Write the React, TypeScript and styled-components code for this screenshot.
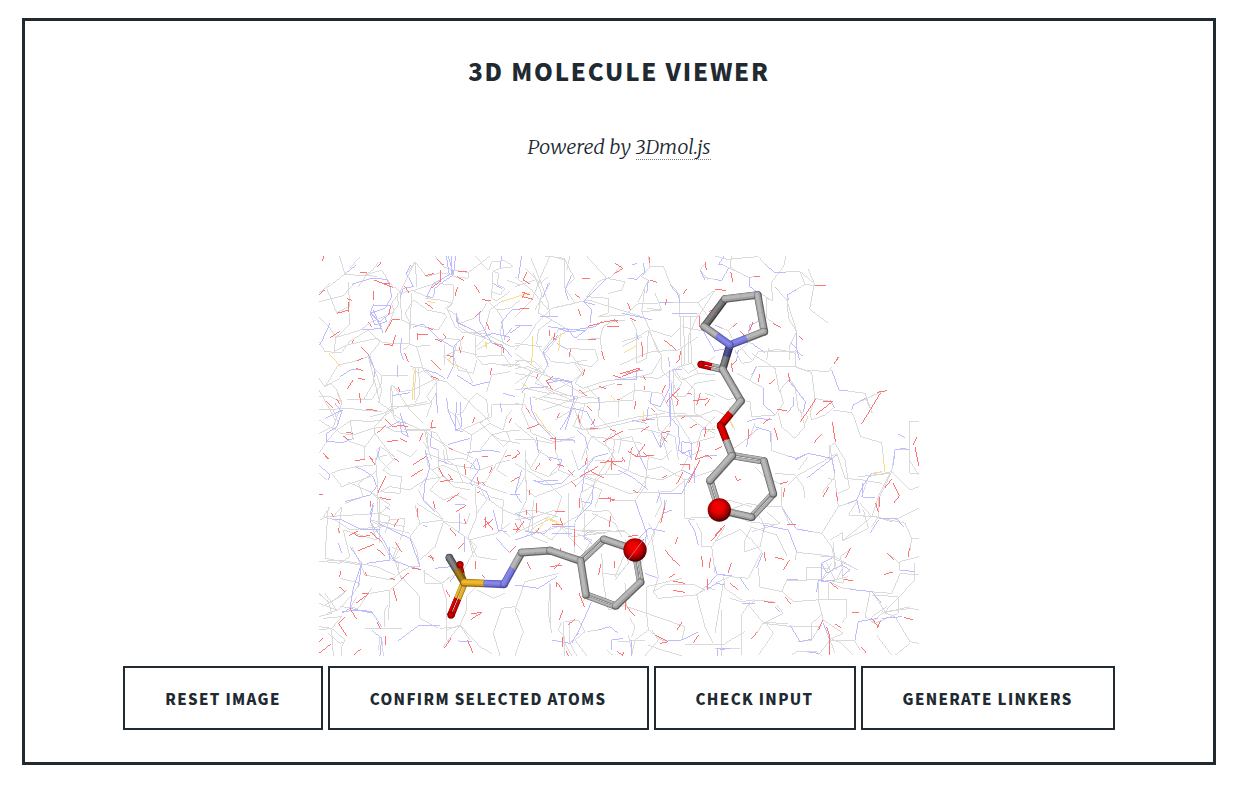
import React from 'react';
import styled, { createGlobalStyle } from 'styled-components';

const GlobalStyle = createGlobalStyle`
  * { box-sizing: border-box; }
  body {
    margin: 0;
    background: #ffffff;
    color: #212931;
    font-family: Merriweather, 'Liberation Serif', serif;
  }
`;

const Panel = styled.main`
  display: flex;
  flex-direction: column;
  align-items: center;
  margin: 18px 26px 21px 22px;
  padding: 30px 24px 32px;
  border: 3px solid #212931;
`;

const Title = styled.h1`
  margin: 0;
  font-family: 'Source Sans Pro', 'Noto Sans CJK JP', sans-serif;
  font-size: 24px;
  font-weight: 900;
  line-height: 40px;
  letter-spacing: 0.075em;
  text-transform: uppercase;
`;

const Credit = styled.p`
  margin: 38px 0 91px;
  font-size: 20px;
  font-style: italic;
  font-weight: 300;
  line-height: 36px;
`;

const CreditLink = styled.a`
  color: inherit;
  text-decoration: none;
  border-bottom: 1px dotted #7c8186;
`;

const Viewer = styled.svg`
  display: block;
  width: 600px;
  max-width: 100%;
  height: auto;
  overflow: hidden;
`;

const Actions = styled.div`
  display: flex;
  flex-wrap: wrap;
  justify-content: center;
  gap: 5px;
  margin-top: 10px;
`;

const ActionButton = styled.button`
  height: 64px;
  padding: 0 40px;
  border: 2px solid #212931;
  border-radius: 0;
  background: #ffffff;
  color: #212931;
  font-family: 'Source Sans Pro', 'Noto Sans CJK JP', sans-serif;
  font-size: 15px;
  font-weight: 900;
  letter-spacing: 0.09em;
  text-transform: uppercase;
  white-space: nowrap;
  cursor: pointer;
`;

type Element = 'C' | 'N' | 'O' | 'S';

const WIRE: Record<Element, string> = {
  C: '#dadada',
  N: '#bcbcff',
  O: '#ff7474',
  S: '#ffdc80',
};

type Tile = { x: number; y: number } & Record<Element, string>;

/* Protein wireframe, split in tiles; three path units make one pixel. */
const TILES: Tile[] = [
  {
    x: -9, y: -6,
    C: 'M88 18L105 72L50 115L80 188L118 170L116 97M27 155L100 137L130 103M105 72L160 78L188 60L207 35M160 78L215 60L240 100L270 125L315 35L350 80L390 68L430 75M316 35L320 110M315 35L290 72M375 18L400 50L430 60L475 68L540 18M475 68V85L430 80M494 18L535 60L547 35L585 32L610 50L570 55L548 65L545 145L560 152L600 125M550 65L565 68L563 105L585 115L570 135L545 125M27 200L60 235L78 262L72 305L110 285L200 265L220 278L250 280L300 282L318 290L360 285M78 262L120 250L155 238L185 215L245 190L265 165L262 130L310 122L360 145M78 262L118 225V190M27 275L45 305L95 308L118 275L175 240L210 275L200 290L175 320L130 335L85 345L45 410L27 385M45 410L60 400L80 420L95 455L60 440L27 440M45 410L90 385M175 320L185 345L215 378L295 378M175 320L210 460L250 485M180 318L215 420L205 460M240 100L270 125L275 210L300 222L385 240L410 200L402 190L352 180L310 150L285 190L300 220L297 285L280 300M270 125L245 160L252 185L225 250M305 130L298 280M310 122L345 110L380 100L430 105L430 150L412 178L440 195L450 220L490 205L515 185L530 160M345 145L390 150L430 160L405 175M412 178L435 230L460 248L525 250L605 290M440 195L445 230L480 250L528 265L580 290M320 290L340 360L370 388L410 395L470 450L540 515M318 350L312 450M325 350L330 430L315 460M300 350L345 355L380 395L350 440L365 460L350 500M345 360L325 370L305 355M245 405L270 425L310 420L370 390M240 410L245 490L290 520L345 545L355 600L365 629M245 405L250 500L285 540L350 540L370 535M252 408L300 480L340 520M180 500L220 490L270 470L330 460L350 455M80 540L125 510L175 515L215 510L240 470L300 470L360 460L380 430L378 395M80 540L90 550L130 555L190 535L220 500L250 480M27 550L70 530L95 460L80 425M27 510L75 540L85 520L70 480M116 475L27 480M116 475L155 480L215 485M110 450L185 450L215 400L215 378M160 450L190 400V375M190 535L225 530L255 545L350 540L355 600L340 575M193 530L195 550L165 590L120 575L100 560M165 590L163 629M120 510L130 570M195 550L225 590L250 620M27 610L50 575L80 540M200 600L210 590L255 620M350 540L380 550L410 600L412 629M350 545L365 560L430 600L470 615L490 625M412 480L440 500L455 540L500 520L545 500L545 465L630 465M440 495L460 485L480 450L500 430L530 450L535 500L510 520L545 555L580 545L630 540M460 540L485 555L480 600L470 629M485 555L540 520L580 540L590 500L605 480M540 550L570 570L630 580M510 600L545 555L580 590L600 570L590 545M530 150L560 180L600 175L630 150M560 180L580 210L570 250L580 280L605 290L630 285M495 260L497 320L520 345L545 340L605 350L630 330M500 300L545 275M500 320L580 315L605 350M500 290L530 260M440 280L430 320L445 360L490 370L500 330M405 320L425 340L470 360L490 400M530 425L545 375L600 365M575 315V290M570 345L630 345M390 270L410 265L450 270L455 300M405 345V285M400 320L440 300L500 315M145 110L170 75L200 80M27 420L60 480L75 510M60 100L27 130M120 55L150 20M590 90L630 105M580 150L540 180L525 240L490 250',
    N: 'M105 72L138 45M125 103L185 85L230 88L240 110L245 140L225 175L180 190L195 225L230 215L225 200M243 166L190 165L180 190L210 215L240 190M185 190L215 230M27 285L35 275L60 220M350 140L370 142L375 115L400 95L430 75L437 18M409 18L418 75L370 100L350 140M415 18L430 75M425 18V75M290 72L310 110L280 115L270 145M288 72L302 45M438 190L445 220L490 240L520 260L550 250L600 262M440 190V215L470 230M510 185V215L545 280L575 285L605 320M575 18L570 55M605 180L575 215L585 270M630 180H605M600 250L630 228M585 260L605 235M548 100L575 115M310 232L340 222L385 265L430 292L450 270M275 265L270 300L280 330M345 360L380 370L405 385M410 388L430 350V290M440 375L490 407L540 395M245 437L300 428M175 315L195 360V380M90 380L125 358L145 360M262 345V380M75 460L95 485L80 530L50 550V575L100 577L130 565M45 505L75 490L100 480M378 430L383 490M410 445L415 485L440 540L455 530L450 455M440 455L435 540L460 545M270 490L295 560L275 550L270 520M230 535L265 515L290 520M415 583L480 565M470 608L540 600L570 607M580 430L615 440M210 590L200 629M365 545L360 590L385 600M570 460L575 485M155 240L215 235M190 180L220 250',
    O: 'M42 18L37 34M150 68H170M214 35L202 52M192 90L248 112M215 100H240M190 123V150M27 135L46 118M111 145L126 152M81 190L116 180V155M116 155V187M243 168L235 195M225 247L248 208L270 209M61 262L89 245M125 280L132 270M152 290L178 315M175 215L184 230M222 283L248 286L256 256M283 108L298 130M382 28L403 47M345 78L373 70M363 115L392 93L391 60M445 64H470M442 80L461 92M443 112L435 137M493 105L510 130M515 148L542 153M345 158L370 176M495 200L514 183M529 216L538 240M323 250V270M323 253L355 254M355 232L368 240M375 267L395 275M400 253L408 263M454 270L460 258M447 290L453 310M410 316L430 320M283 308L295 335M362 330L392 360M363 378L386 388M545 355L540 375M552 280L582 296V310M591 275L600 268M140 332L160 325M138 355L158 362M145 384L165 390M130 390L112 417M148 430L152 458M80 447L88 462M47 453L67 473M168 478L200 481M265 410L270 425M225 508L248 530L270 527L294 529M232 575L265 570M201 550L227 527M108 547L130 550M100 558L116 570M39 608L56 627M328 574L338 549M360 532H378M367 510L363 530M270 565L290 575M494 500L488 520M605 503L597 520M180 620L188 629M150 628H165M418 595L428 599M585 620L602 615',
    S: 'M55 308L92 350M313 360L306 450M431 311L416 329L435 354M576 155L630 137M352 154L374 158M529 275V296M526 275V290',
  },
  {
    x: 196, y: -6,
    C: 'M48 25L75 90L100 160L105 200M75 85L105 18L150 30L165 60L180 85L150 115M90 18L150 25L150 115M165 18L155 60M215 18L275 85L290 80L320 45M275 85L250 95L215 140L280 145M275 85L330 95L320 120L280 130M280 145V190L250 200L330 195L370 160L550 157L600 120M150 115L180 160L110 175L65 220L40 260L0 300M110 175L220 150L380 200M75 90L50 150L0 200M30 55L75 100L100 80M55 70L80 130L70 190L110 210L160 240L130 260L90 310M0 80L50 120L100 180M0 110L60 90M400 18L405 50L445 48L465 100L495 135V200L550 200L600 120M405 50L380 80L400 90L370 155M420 130L440 180L395 175M440 180L380 185L405 240L470 260L500 230L600 250M550 160L580 200M560 80L600 88M580 90L555 60L575 35M495 200L500 350L520 370L600 320M505 200L510 340L490 355M525 200L530 340L490 350L480 360L500 390L550 370L530 340M550 190L520 260V340M350 210L365 240V340L395 325L400 240L370 260L320 275M400 240L440 320L410 370L355 385M405 245L430 310M315 345L370 320L410 305L490 300L550 260M185 270L255 265L260 300M255 265L265 230L290 215L330 210M160 295L240 300L250 330L230 350L180 340L200 370M165 310L205 360L180 400L205 415L265 395L360 380L430 385L480 355M85 305L110 335L160 340L215 330M85 300L130 240L160 235M110 210L70 240L65 280L100 340L85 370L40 350L0 355M0 330L60 335L110 390L170 395L205 370M0 310L85 370L60 400L170 440M0 370L60 380L100 420L170 450M0 345L130 390L200 430L300 400M0 400L80 350M0 280L80 290M20 420L50 360M0 420L30 415L100 430L160 400M30 430L20 480L50 550L115 575L180 570M0 460L30 465L50 500L120 560M50 440L180 480L200 540L370 500L450 490M60 450L110 430L190 440L170 480L120 510M80 440L140 450L200 460L290 455L355 450L360 400M85 480L200 440L250 445L215 410M200 470L175 530L210 540L260 535L370 510L440 500L560 495L600 480M210 460L195 520L230 560L320 570L380 580M255 440L250 500L290 540L320 565L310 610M310 500V450L360 420L440 430L460 470M290 600L230 560L210 600L200 629M0 520L60 570L110 580L180 560M0 570L60 570L70 600L110 629M300 629L270 580L290 550M290 629L300 570L350 560L380 629M340 540L380 535L440 550L460 629M400 450L430 480L470 490L510 490L560 530L600 550M425 490L430 540L480 560L490 629M430 560L480 500L560 500M470 360L500 400L470 440L480 500L530 580L600 560M475 360V440L510 440L540 400L600 390M500 380L540 420V490L590 520M550 370L600 375M440 320V360L475 400L490 440M570 430L600 440M545 590L560 540L600 500M320 290L380 260M380 185L390 110M105 100L60 180',
    N: 'M20 18L10 85M100 100L85 140M170 75L150 120L160 150M275 85L205 155L230 180L225 220M205 155L240 165M350 45L365 40M400 90L395 130M340 85L365 88L390 65L385 40M465 105L490 135L495 158M435 158H475M555 60L570 90M0 228H50M75 200L130 200M160 240L180 265L220 235M100 230L175 240L240 230L260 215M215 240L160 245L130 235M130 255L85 305L100 350M125 280L160 300M320 190L370 200L410 210M365 250L370 270M470 190H545M560 235L600 305M460 320L465 350M330 370L385 360M300 390L365 390V360M100 390L125 385L170 395L175 450M20 430L30 415L100 410M45 440L50 480L70 520L120 570L175 570L180 580M95 400L140 390L170 400M175 475L215 485L240 530M180 440L160 500L135 540M170 480L150 540M250 440L255 480M185 540L210 560L220 600M410 430L405 460L435 470L465 410V360M465 430V500L490 530V560M470 400L465 530M400 470L395 510L420 510M495 560L490 600L530 625L530 580L500 575V610L530 600M440 550L435 595L460 550M410 540L435 590M560 540L600 540M65 560L70 610M500 360H475M350 510L395 520',
    O: 'M35 66L25 90L44 102M200 85H225M22 128L45 134M22 140L55 148M20 145L30 125M8 178L42 174M180 133L195 144M190 178L197 198M301 40L323 55L297 72M404 20L403 40M404 90L425 97M516 118L503 132M454 148L452 165M338 160L347 180M570 35L574 60M583 185L600 175M220 229L270 215L310 210M275 229H312M345 205L364 213M298 208L308 218M220 268H242M102 240L104 258M119 250L115 270M113 260L124 270M166 297L163 320M260 303L268 330M378 276L384 300V320M446 269L484 299M496 303L494 327L484 340M316 371L375 354M320 380L375 358M295 376L317 384M68 373L64 388M92 390L112 420M115 377L95 395M210 358L203 378M252 408L273 417M305 403H320M191 418L217 440M385 378L392 390M390 408V420M451 405L440 430M494 414L451 460M470 430L490 450L485 468M516 430L532 433M535 452L580 446M545 465L556 430M570 468L585 446M217 470L232 483M34 473L45 490M35 537L72 523M133 490L126 505M190 495L194 520M240 507L230 525M225 535L250 535M285 537L303 545M265 575L325 542M362 453L359 477M305 448L315 449M410 475L418 485M378 545L403 528M382 513L403 508M121 560V600M105 567L123 564M352 590L346 610M390 583L365 618M360 620L417 617M526 533L545 523M573 530L569 560M555 575L550 600M440 547L466 545M455 575L443 560M498 505L510 499M555 198V230M0 620L15 610',
    S: 'M0 142L45 128M52 258V315L48 345M136 250L131 304M328 308L367 286M22 400L42 416M59 487L105 553M288 436L302 455M386 483V520M575 547L600 530M450 558L433 580',
  },
  {
    x: 396, y: -6,
    C: 'M0 18L35 28L130 20L150 42M25 45L100 82L132 79M212 18L208 45L170 97L172 152L155 145V205L180 220M130 125L170 152M213 65H255L270 104L240 120M255 65L298 100M280 58L298 100L284 178L340 220M270 104L300 106M181 112L215 150L245 245L220 205L217 145M245 245L225 285V330M0 225L40 242L60 222M40 242L55 270L110 280L145 305L190 298L242 310M100 280L60 310M160 295L155 330M75 290L110 330M50 18L45 50L65 65',
    N: 'M150 42L178 67H213M28 18L10 45L25 45M40 55L20 92L0 88M243 120L217 135L220 150M105 80V110L125 125M181 112L190 120M100 250L105 225L130 215M0 225L20 235M110 280L150 308M230 280L245 295L253 329M245 250V300M70 300L65 329M0 302L40 295',
    O: 'M117 79H134M300 106H332M47 65L54 97M0 118L32 121M175 220L197 233M253 257L262 269M115 215L104 242M65 220L54 232M76 244L90 260M370 320L366 329',
    S: '',
  },
  {
    x: 396, y: 94,
    C: 'M60 0L80 40L110 35L130 5L240 5L243 50L290 68L300 145L350 155M110 10L180 55L193 125M130 50L240 50L265 60L340 65L352 50M65 70L147 115M125 50L105 90M0 130L40 150L70 140M180 195L205 160L195 120L220 90L240 110M220 80L265 150M240 110L250 180L280 200L270 220M190 190L200 230L240 265L270 230L255 180M375 120L450 130L472 190L450 140M500 125L413 165M353 180L412 188L437 260L500 278L505 320M300 145L285 190L290 210L330 195L355 175M0 180L40 200L60 240M75 150L105 155L110 200L180 195M170 250V302L220 318M120 220L105 260L50 300M360 278L345 290L360 380L320 430M360 280L390 330L403 415L370 430M345 285V330M390 385L443 390L500 400M390 385L365 310L340 325M370 470L425 450M370 470L320 550L245 537M370 470L360 390L340 385M280 320L250 360M180 370L240 375L265 410L270 445M220 405L250 375L340 325M150 380L120 350M200 405L150 380M145 335L120 315M60 325L145 335M40 480L100 460L145 470L200 470V410M0 460L40 450L110 470M90 500L125 485L150 530M0 470L100 515L190 525M155 485L195 520L110 545M105 530L185 555L215 617M145 545L135 590L90 605V570L110 530M200 470L225 525M320 550L350 590L365 660M385 547L345 570M430 450L400 495L470 500L490 440L525 370L430 380M435 460L470 500L383 572M383 545V572L460 535L445 480M400 495L480 500L530 515L611 475M440 440L460 380L530 365L490 450M530 365L585 420L611 410M540 300L585 300V370H611M611 215H583V330L611 375M530 365L540 300M470 370L500 365M490 440V500L470 530M480 500L570 520L590 565H611M590 565L585 600M0 575L75 538L110 570L140 605L100 685L45 680L0 700M245 607L340 617L430 660M245 607L240 630M320 690H275V652L340 655M315 620L360 620L410 650M320 690L360 650L355 575M365 690L385 650L375 620L405 600M335 690L385 700L380 640M335 640L360 690L400 680M350 640L320 690M330 690L385 715L420 718M465 725L530 730L556 670L611 675M555 635L611 620M525 615L555 640V660M465 725L450 800L480 820L550 790V740L470 735M475 730L510 785L590 775L611 780M510 785L600 690V640M515 770L470 800M585 770L500 790L470 820M500 785L540 800L585 875L611 880M305 750H340L395 750V800L380 820M340 700V750M310 700V750L325 810M305 750L235 755L203 725L135 712L130 655M200 725L215 690L275 692M125 750L100 765L145 818L220 820M80 750L30 715L25 680M45 745L80 755L115 750L175 755M145 818L125 850M105 755L80 795V916M150 815L175 850L130 916M185 765L205 790L145 820L235 830L320 828M345 870L420 873L435 900M345 868L385 850L325 810L290 870L250 875M345 870L310 916M345 870L360 910M345 865L380 880L415 916M290 870V820L325 790M485 855L530 916M540 916L585 880M230 916L245 905H305L320 916M0 897H75M0 850L25 700M30 880L90 845',
    N: 'M350 60L372 120L400 122M410 180L415 165L450 145M125 48L110 75M240 0L265 20M220 90L272 155L265 185M147 115V165L180 195M237 140V165L215 190M95 215L130 205L170 210M120 230L168 245V275M95 290L100 260L130 235M220 318L245 325L280 310M240 330L280 310L350 325L360 370M275 385L365 315M540 300L565 295L583 300M550 253L570 262M540 300L535 345M245 537L225 510L200 470M245 537L290 545M145 525L220 540L245 605M150 525L145 545M425 450L445 405L470 370M425 450L435 490M443 400V442H480M492 505L545 505L565 530M490 510L465 550M0 650L5 673L50 678M75 683L100 720M125 655L143 610M80 760L120 762M215 690H250M180 770L195 785M225 825L255 875L290 868M305 725L310 690L340 695M320 640V695L360 690M320 640L350 625M320 640L335 670L380 645L405 660L380 680M405 718L470 725L500 760M555 660L600 665M420 870L430 815L490 805M325 820L345 870M8 916V895H45M275 905L310 910M500 805L560 800M425 450L400 460M345 150L360 175',
    O: 'M371 20L356 43M181 88L163 102M133 72L131 97M220 70L225 95M65 30L52 45M50 40L52 65M187 178L215 182M303 147L255 217M302 194L355 153M325 155L350 155M497 128L440 222M485 127L516 122M352 215L361 275M320 253L295 280M100 237V268M179 235L188 269M165 205L145 220M0 300L20 290M195 402L218 395M209 415L204 442M324 440L342 410M363 425L368 452M530 388L508 415M535 400L553 438L535 460M493 440V470M482 460L490 485M215 523H242M60 378L68 392L78 388M147 605L151 632M180 621L206 629M223 630L206 659M50 638L39 668M45 700L70 720M407 595L390 625M517 610L537 630M508 673L535 666M583 595L580 620M387 687L413 693M345 697L368 716M147 754L179 759M212 742L227 763M127 845L109 868M324 810L310 840M360 822L378 834M335 830L343 855V916M410 788H432M567 803L595 809M485 835L497 812M468 803L490 830M438 890L455 910M18 535L0 557M607 260L594 286M600 290L611 347',
    S: 'M505 320L509 365M476 371L498 366M43 170L47 215L53 235',
  },
  {
    x: -9, y: 194,
    C: 'M65 70L90 60L140 50L190 45M65 70L95 110L180 80L200 60L195 25L230 15M230 0L250 30L220 60L240 75L275 80L270 130L210 125M115 97L180 125L240 165L210 190L50 200L30 210M180 125L210 150V280M200 50L205 220M180 75L145 100L160 140L105 160M210 125L240 110L300 120L345 90L400 80L430 110L480 120M345 0L355 50L390 85L360 120L400 150L440 135L470 150M350 10L400 30L460 25L490 45M385 0V60L420 95L480 100M365 60L400 45L440 65L500 100L530 95M400 0L405 40L510 60L550 45M410 30L440 50L460 100M55 170L50 240L45 325L150 345M60 170L40 200L75 210L120 240L210 230M70 200L95 170L85 250M125 290L150 340L165 375L245 390L265 370L300 350L330 350M100 240L200 270L180 210L285 230M180 210L205 225L300 250M185 255L240 210L285 205L280 240L270 270M215 275L245 330L265 340V370L330 440V505L385 535M100 240L120 320L90 340L45 335M27 335L90 330L200 350L255 375M205 190L240 200L225 250M245 290L265 300L250 330L270 320M265 280L250 320L275 390L240 420L180 430M315 165L330 220L300 260L320 300L330 350M330 220L400 210L320 160M400 215L480 270L500 320L560 330M400 215L375 290L330 330M400 215L470 220L480 190M400 210L385 190L340 150L325 120M495 110L500 200L475 260L490 320M480 100L510 110L530 150L500 190M480 90L560 120L590 130M510 130L580 180L630 200M540 140L580 150L575 240L600 260M475 270L560 250L600 220M475 265L500 290L460 360L430 380M340 365L395 400L420 380M345 360V400L395 400L430 375M395 400L410 450V570L420 575M410 540L450 525L400 590M450 525L510 590L545 610M450 525L480 570M450 525L470 480V440L500 410M450 530L390 535M500 420L550 445L585 430M35 470L90 440L110 420L60 460L27 430M27 460L80 480L45 430M50 490L85 480L130 430L150 400L90 385M25 430L55 455L65 490L27 500M90 470L145 475L185 415M120 475L140 440M27 530L65 535L105 570L95 590V617M27 540L65 535L95 500L40 505M65 540L70 617M55 550L90 580L100 575M165 535H275M210 560L205 600M235 510L240 420M225 530V480L235 465M215 560L220 617M550 550L575 475L615 470L630 485M550 550L570 617M27 70L50 90M600 30L560 40L530 90M590 0L560 60L590 80M350 80L330 110M260 0L300 20L320 0M200 0L210 30L240 60',
    N: 'M27 45L60 75L55 90M135 50L160 60L190 80L200 110L180 135L105 155M345 0L360 50L345 100L340 150L375 185M190 165L180 215L220 270L250 330L300 350L330 358M205 220L265 250L300 265L330 350M70 208L95 210L155 240L210 240M85 280L95 310M120 290L155 340L130 415L120 475L95 490M170 340L240 330L240 290M155 340L145 410M95 485L150 480L185 485L215 530M120 475L190 490M185 540L215 565L210 617M265 572L325 527H390M385 30L415 40M480 55L500 25L510 55L480 100L490 110M500 110L530 125L540 150M550 180L565 240L590 245M560 265L590 300L600 310M465 305V260M420 395L435 375L455 350M435 165L465 162M225 170L240 180M450 190V230L445 250M445 573L485 575M375 355L425 350M190 160L180 195M485 40L500 60M600 135H630M340 225L350 230',
    O: 'M39 10L56 28M136 32L162 28M178 18L195 45M310 43L348 20M303 80L340 57M228 77L203 130M27 133H39M211 143L242 150M183 153L180 172M252 25L268 35M324 175L322 200M370 152L376 178M412 155L447 130M438 185L468 167M266 207L252 230M117 256L145 243M133 250L145 260L180 257M180 245L215 275M143 303L193 282M202 297L225 317M255 275L275 307M65 190L71 200M85 235L89 250M92 363L89 382M305 355L332 358M273 388L298 367M355 320L373 325M362 315L370 332M420 235L438 257M445 295L463 278M408 420L419 440M496 333V357M515 375L526 383M523 207L550 240M550 208L520 230M527 200L525 235M464 208L467 223M484 490L516 488M484 508L515 488M87 410L104 425M138 460L178 430L155 432M250 415L260 452M120 475L139 507M85 520L110 558M85 520L105 500M226 558V584M201 515L212 538M27 575L39 565M27 610L62 583M132 615L152 597M424 563L403 595M472 569L489 609M165 365L170 377M240 384L255 390M463 43L468 75M386 53L400 80M391 95L430 88M416 72L425 88M503 80L505 105M516 97L525 105M547 50L538 70M516 20H533M603 94L630 80M605 25L620 20M500 130L509 124M620 0L630 10M600 305L617 290M610 240H630',
    S: '',
  },
  {
    x: 196, y: 194,
    C: 'M0 40L30 60L35 120L60 140M30 25L50 60L100 80L135 40L120 0M30 80L0 130M30 0L35 150L10 200L30 240L70 250L130 230L180 240L240 250L330 240M35 60L100 100L140 140L120 200L60 230L30 260M60 140L140 110L200 80L240 95L230 130L190 200M200 75L310 75L340 60L350 0M260 75L230 110L195 130L205 180L250 185L280 180L300 210M215 0L220 70L180 110M270 75L290 40L380 80L440 90M290 35L240 30M215 80L340 130L370 128L400 75M370 128L470 125L510 90L600 60M290 150L360 152L390 110L400 20L440 30L470 0M360 152L395 250L400 270M200 190L150 220L110 270L60 240M180 220L180 310M185 250L230 270L200 320M160 130V260L200 300M210 190V270M0 190L50 180L130 200M0 210L60 200L120 180M0 250L100 200L170 260L260 250M20 170L50 200L40 240M55 150L50 260L100 280M220 240L330 245L390 290M230 190L300 220L320 260M250 190L200 240L270 250M0 480L30 395L130 370M0 480L25 545L0 617M105 400L100 490L110 550M105 400L108 530M260 310L265 400L280 480L335 465M330 400L335 470L395 490V410L500 385M300 390L340 340L330 270M265 370L310 375L340 340M395 490L400 540L360 570L350 617M395 490L510 530L500 570M400 540L440 570L460 575M410 540L430 570L390 617M345 505L360 530L350 560M140 515L130 540L150 560L150 617M145 515V570L170 617M165 515V580L185 617M150 515L190 510L210 545L180 570L215 617M215 545L250 540M275 600L295 617M415 425L450 405L540 405L570 420L540 435L430 445L415 425M545 435L570 530L595 580M545 435L570 410L600 420M415 425L430 380L410 260L440 200L455 150M420 200L440 160L430 120M510 90V205L540 210M510 90L440 50L400 60M510 205L600 200M560 290H590L600 370M560 290V250L545 220M590 290L630 230M510 585H630M620 480V617M400 585L440 600L500 617M340 555L350 600M310 575L390 570M50 50L80 0M100 80L125 65M240 90L300 0M440 90L500 60L520 20L560 0M170 0L190 60L240 20M365 380L395 290L420 250L400 220M380 260L330 310L300 380M130 60L180 80M210 100L260 120L240 170',
    N: 'M55 90L90 105L140 100L180 60M60 95L130 90M20 60L0 130M0 130L20 160M95 20L140 30L130 60M240 20L210 60L200 130M240 20L280 10M235 105L230 160L190 200L180 215M200 155L230 160M210 45L190 60M310 60L350 80L400 120M380 30L370 0M375 20L395 60M435 130L500 130L520 90L540 60M450 150L445 190L470 180M360 152L395 250L390 280M0 190L45 210L60 200M30 245L90 250L110 230L180 230M60 250L0 270M220 245L205 260L230 280M0 405L70 415L125 380M520 210L540 245L550 285M575 410L605 375L630 373M580 415L605 400L630 405M390 370L430 385M170 580L190 545L230 455M250 540L285 530L310 550M290 600V570L325 565M350 570V617M607 617V595L630 600M460 573L500 570L550 545M370 265L400 235L450 245M110 570L165 580L190 550M520 0L530 30M540 50V100M605 15L570 20M435 130L425 160M110 250L170 250M500 60L540 80',
    O: 'M75 40L60 60M45 135V120M102 27L108 33M125 42L147 49M168 93L185 112M175 75L160 60M195 80L248 50M215 25L210 45M228 65L268 85M255 37L323 33M276 30L304 45M290 25L288 60M320 20L330 35M340 5L365 20M385 8L395 17L417 15M440 85L455 76M485 102L505 65M496 43L525 45L523 60M520 100L555 30M550 0L540 30L578 15M577 15L590 25M355 120L370 130M253 145L300 148M280 143L296 152M288 140V155M288 198L282 230M450 168L437 220M195 145L193 175M65 160V190M34 180V195M120 185H150M180 237V287M110 225L140 223M5 245L28 212M0 220L10 240M60 250L72 235M135 205L143 225M135 295L140 310M105 350L140 345M117 357L133 340M35 335L46 357M340 260L370 255M297 333L299 355M257 343L251 375M125 397L142 420M125 400V412M192 430L208 470M144 480L133 510M160 524L181 507M335 470L358 497M330 455L333 480M488 262L480 283M450 300L475 330L495 347M560 318L563 350M586 325L583 355M463 382L480 372M475 393L510 400M473 421L510 427M577 388V420M502 515L485 541M550 556L534 580M425 557L460 575L435 580M143 562V590M153 603L160 617M306 603L323 617L325 607M590 272L630 225M420 555L430 560M180 250V285',
    S: 'M69 240L96 205L143 228M200 458L215 440M105 207L130 216',
  },
];

type Atom = { x: number; y: number; el: Element };
type Bond = [number, number, ('double' | 'thin' | 'shaded')?];
type Ligand = {
  x: number;
  y: number;
  atoms: Atom[];
  bonds: Bond[];
  marked: number;
};

const at = (x: number, y: number, el: Element = 'C'): Atom => ({ x, y, el });

const LIGANDS: Ligand[] = [
  {
    x: 361, y: 14,
    atoms: [
      at(135, 87), at(233, 75), at(253, 185), at(150, 225, 'N'), at(73, 170),
      at(128, 298), at(63, 283, 'O'), at(183, 393), at(122, 467, 'O'),
      at(157, 557), at(252, 573), at(280, 672), at(215, 742), at(118, 720), at(90, 632),
    ],
    bonds: [
      [5, 6, 'double'], [3, 5, 'shaded'], [4, 0, 'shaded'], [0, 1], [1, 2], [2, 3], [3, 4], [5, 7], [7, 8], [8, 9],
      [9, 10, 'double'], [11, 12, 'double'], [13, 14, 'double'], [10, 11], [12, 13], [14, 9],
    ],
    marked: 13,
  },
  {
    x: 111, y: 264,
    atoms: [
      at(58, 113), at(103, 188, 'S'), at(90, 134, 'O'), at(63, 285, 'O'), at(222, 193, 'N'),
      at(275, 98), at(360, 92), at(452, 123), at(522, 58), at(615, 90), at(632, 187),
      at(557, 258), at(468, 225),
    ],
    bonds: [
      [1, 2, 'thin'], [1, 3, 'double'], [0, 1, 'shaded'], [1, 4], [4, 5], [5, 6], [6, 7],
      [7, 8, 'double'], [9, 10, 'double'], [11, 12, 'double'], [8, 9], [10, 11], [12, 7],
    ],
    marked: 9,
  },
];

/* Rim, body and highlight of a lit cylinder. */
const SHADES: Record<Element, [string, string, string]> = {
  C: ['#606060', '#a0a0a0', '#b8b8b8'],
  N: ['#50509c', '#7474d4', '#8686e8'],
  O: ['#6b0000', '#c80000', '#e20000'],
  S: ['#8d6813', '#d7a01f', '#f0b82b'],
};

/* The same for bonds that turn away from the light. */
const DIM_SHADES: Record<Element, [string, string, string]> = {
  C: ['#3c3c3c', '#6a6a6a', '#848484'],
  N: ['#28284e', '#3e3e78', '#505094'],
  O: ['#5a0000', '#980000', '#b40000'],
  S: ['#5c440c', '#8a6816', '#a87e1c'],
};

function Rod({ a, b, width, dim }: { a: Atom; b: Atom; width: number; dim?: boolean }) {
  const mx = (a.x + b.x) / 2;
  const my = (a.y + b.y) / 2;
  const shades = dim ? DIM_SHADES : SHADES;
  return (
    <g>
      {[1, 0.78, 0.4].map((share, layer) => {
        const shift = layer === 0 ? 0 : -width * 0.06 * layer;
        const half = (from: Atom) => (
          <line
            x1={from.x + shift} y1={from.y + shift} x2={mx + shift} y2={my + shift}
            stroke={shades[from.el][layer]} strokeWidth={width * share}
          />
        );
        return (
          <g key={layer}>
            <circle cx={a.x + shift} cy={a.y + shift} r={(width * share) / 2} fill={shades[a.el][layer]} />
            <circle cx={b.x + shift} cy={b.y + shift} r={(width * share) / 2} fill={shades[b.el][layer]} />
            {half(a)}
            {half(b)}
          </g>
        );
      })}
    </g>
  );
}

function BondShape({ a, b, kind }: { a: Atom; b: Atom; kind?: Bond[2] }) {
  if (kind === 'thin') return <Rod a={a} b={b} width={15} />;
  if (kind !== 'double') return <Rod a={a} b={b} width={23} dim={kind === 'shaded'} />;
  const length = Math.hypot(b.x - a.x, b.y - a.y);
  const ox = (-(b.y - a.y) / length) * 6;
  const oy = ((b.x - a.x) / length) * 6;
  const move = (p: Atom, sign: number): Atom => ({ ...p, x: p.x + ox * sign, y: p.y + oy * sign });
  return (
    <g>
      <Rod a={move(a, -1)} b={move(b, -1)} width={10} />
      <Rod a={move(a, 1)} b={move(b, 1)} width={10} />
    </g>
  );
}

function LigandShape({ ligand }: { ligand: Ligand }) {
  const marked = ligand.atoms[ligand.marked];
  return (
    <g transform={`translate(${ligand.x} ${ligand.y}) scale(0.33333)`}>
      {ligand.bonds.map(([i, j, kind]) => (
        <BondShape key={`${i}-${j}`} a={ligand.atoms[i]} b={ligand.atoms[j]} kind={kind} />
      ))}
      {ligand.atoms.map((atom, i) =>
        atom.el === 'O' && i !== 8 ? (
          <circle key={i} cx={atom.x} cy={atom.y} r={11} fill="url(#oxygen)" />
        ) : null,
      )}
      <circle cx={marked.x} cy={marked.y} r={35} fill="url(#selected)" />
    </g>
  );
}

const ELEMENTS: Element[] = ['C', 'N', 'S', 'O'];

function MoleculeViewer() {
  return (
    <Viewer viewBox="0 0 600 400" role="img" aria-label="Protein pocket with two ligand fragments">
      <defs>
        <radialGradient id="selected" cx="0.45" cy="0.4" r="0.6">
          <stop offset="0" stopColor="#ff0000" />
          <stop offset="0.4" stopColor="#e60000" />
          <stop offset="0.75" stopColor="#980000" />
          <stop offset="1" stopColor="#400000" />
        </radialGradient>
        <radialGradient id="oxygen">
          <stop offset="0" stopColor="#dd0000" />
          <stop offset="1" stopColor="#900000" />
        </radialGradient>
      </defs>
      {TILES.map((tile, i) => (
        <g key={i} transform={`translate(${tile.x} ${tile.y}) scale(0.33333)`} fill="none" shapeRendering="crispEdges">
          {ELEMENTS.map((el) => (
            <path key={el} d={tile[el]} stroke={WIRE[el]} strokeWidth={3} />
          ))}
        </g>
      ))}
      {LIGANDS.map((ligand) => (
        <LigandShape key={ligand.marked} ligand={ligand} />
      ))}
      <path d="M309 304L325 283" stroke="#d06a78" strokeWidth={1} />
    </Viewer>
  );
}

const ACTIONS = ['Reset image', 'Confirm selected atoms', 'Check input', 'Generate linkers'];

export default function App() {
  return (
    <>
      <GlobalStyle />
      <Panel>
        <Title>3D Molecule Viewer</Title>
        <Credit>
          Powered by <CreditLink href="#3dmol">3Dmol.js</CreditLink>
        </Credit>
        <MoleculeViewer />
        <Actions>
          {ACTIONS.map((label) => (
            <ActionButton key={label} type="button">{label}</ActionButton>
          ))}
        </Actions>
      </Panel>
    </>
  );
}
